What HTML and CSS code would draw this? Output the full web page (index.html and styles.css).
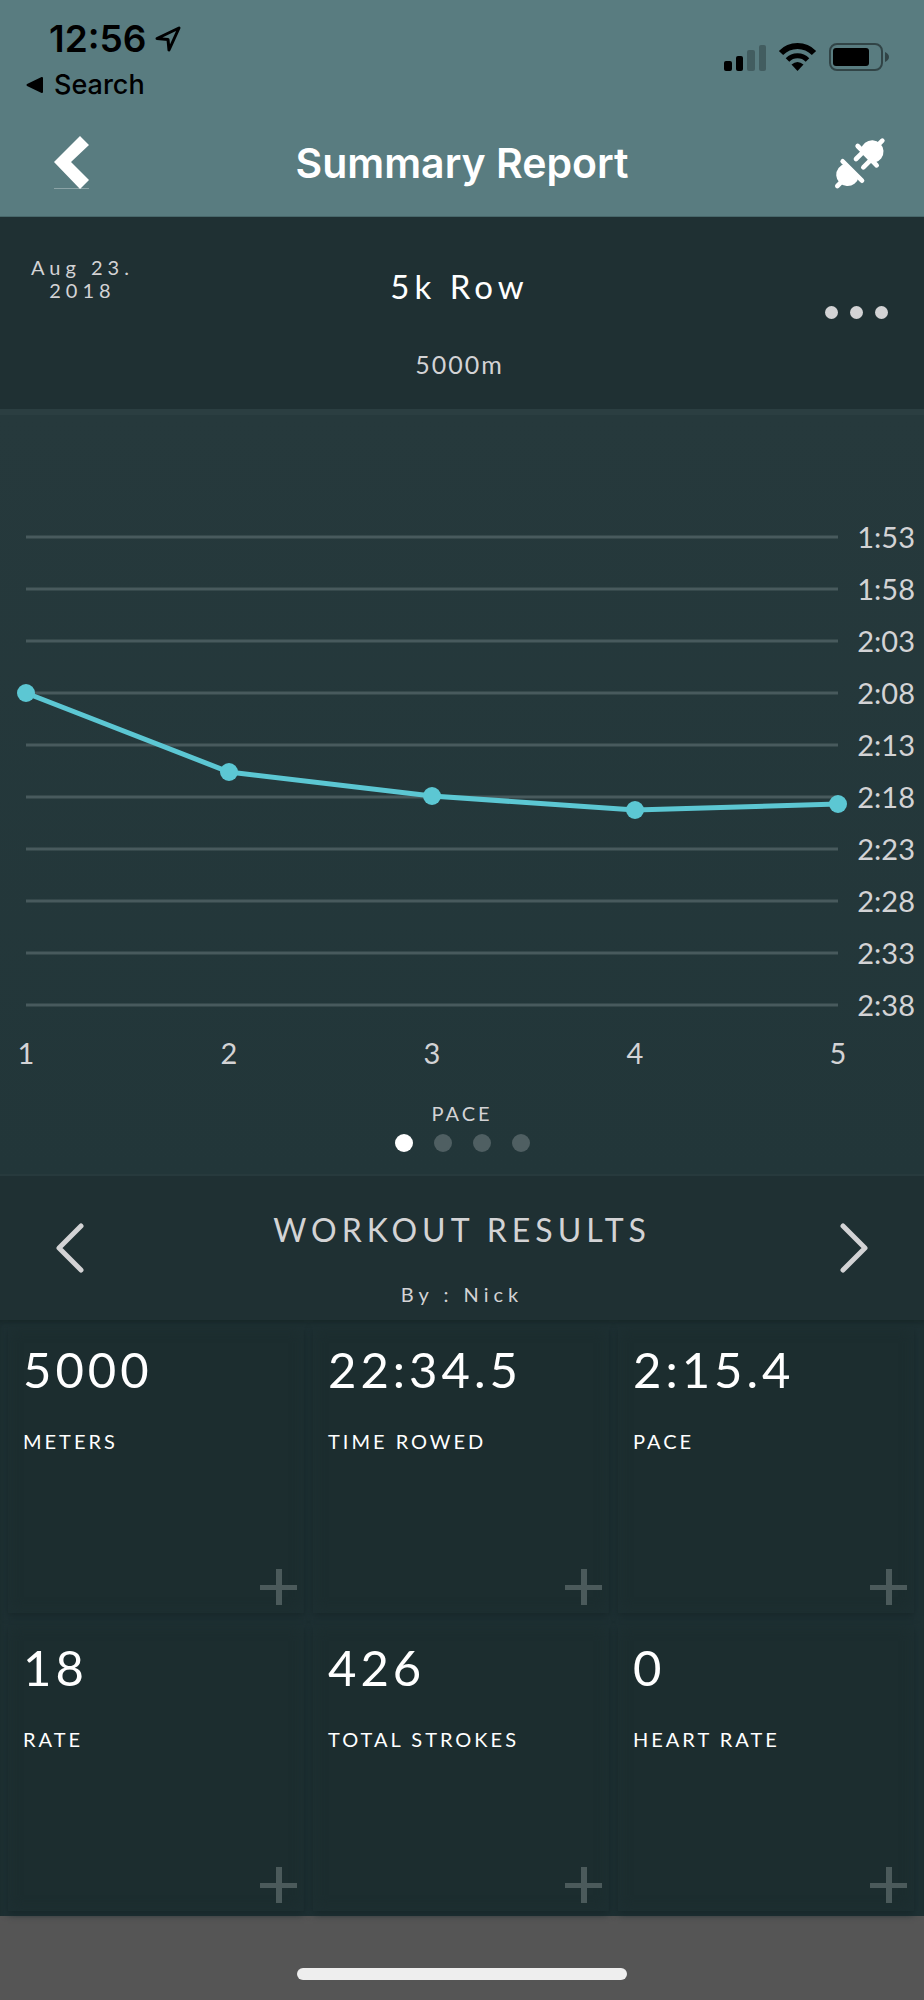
FILE: index.html
```html
<!DOCTYPE html>
<html lang="en">
<head>
  <meta charset="UTF-8" />
  <meta name="viewport" content="width=device-width, initial-scale=1.0"/>
  <title>Summary Report</title>
  <link rel="stylesheet" href="styles.css">
</head>
<body>

  <!-- Top bar -->
  <header class="topbar">
    <div class="status">
      <div>
        <div class="clock">
          12:56
          <svg width="26" height="26" viewBox="0 0 26 26" fill="none" stroke="#000" stroke-width="3" stroke-linejoin="round"><path d="M2 12.500 L24 2 L14 24 L13 13.500 Z"/></svg>
        </div>
        <a class="back-app" href="#">
          <svg width="18" height="18" viewBox="0 0 18 18"><path d="M1.500 9 L16 2 L16 16 Z" stroke="#000" stroke-width="2" stroke-linejoin="round"/></svg>
          Search
        </a>
      </div>
      <div class="status-icons">
        <svg width="42" height="28" viewBox="0 0 42 28">
          <rect x="0" y="18" width="8" height="10" rx="2"/>
          <rect x="12" y="13" width="7" height="15" rx="2"/>
          <rect x="23" y="7" width="8" height="21" rx="2" opacity=".25"/>
          <rect x="35" y="2" width="7" height="26" rx="2" opacity=".25"/>
        </svg>
        <svg width="37" height="28" viewBox="0 0 37 28">
          <path d="M2 10 A23 23 0 0 1 35 10" fill="none" stroke="#000" stroke-width="6"/>
          <path d="M8.500 17 A14 14 0 0 1 28.500 17" fill="none" stroke="#000" stroke-width="5"/>
          <path d="M12.500 21.500 Q18.500 16.500 24.500 21.500 L18.500 28 Z"/>
        </svg>
        <svg width="60" height="28" viewBox="0 0 60 28">
          <rect x="1" y="1" width="52" height="26" rx="7" fill="none" stroke="#000" stroke-width="2" opacity=".45"/>
          <rect x="4" y="5" width="36" height="18" rx="3"/>
          <path d="M56 9 Q60 11 60 14 Q60 17 56 19 Z" opacity=".45"/>
        </svg>
      </div>
    </div>
    <nav class="navbar">
      <button type="button" class="icon-btn" aria-label="Back">
        <svg width="35" height="53" viewBox="0 0 35 53"><path d="M26 0 L35 9 L17 26 L35 44 L26 53 L0 26 Z" fill="#fff"/><path d="M0 52.500 H35" stroke="#fff" opacity=".3"/></svg>
      </button>
      <h1>Summary Report</h1>
      <button type="button" class="icon-btn" aria-label="Connection">
        <svg width="50" height="50" viewBox="0 -4 150 150" fill="#fff" stroke="#fff" stroke-width="14" stroke-linecap="round">
          <path d="M78 31 A34 34 0 1 1 118 70 Z" stroke="none"/>
          <path d="M68 20 L125 78 M128 18 L142 4 M86 36 L63 59 M109 60 L85 84" fill="none"/>
          <path d="M31 73 A34 34 0 1 0 71 113 Z" stroke="none"/>
          <path d="M23 66 L81 124 M20 127 L7 140" fill="none"/>
        </svg>
      </button>
    </nav>
  </header>

  <main>
    <!-- Workout info -->
    <section class="workout">
      <p class="date">Aug 23.<br>2018</p>
      <div class="workout-name">
        <h2>5k Row</h2>
        <p class="distance">5000m</p>
      </div>
      <button type="button" class="more" aria-label="More options"><span></span><span></span><span></span></button>
    </section>

    <!-- Pace chart -->
    <section class="chart">
      <svg class="chart-plot" viewBox="0 0 924 665" role="img" aria-label="Pace per 1000m">
        <g class="grid">
          <path d="M26 122H838 M26 174H838 M26 226H838 M26 278H838 M26 330H838 M26 382H838 M26 434H838 M26 486H838 M26 538H838 M26 590H838"/>
        </g>
        <polyline class="line" points="26,278 229,357 432,381 635,395 838,389"/>
        <g class="points">
          <circle cx="26" cy="278" r="9"/>
          <circle cx="229" cy="357" r="9"/>
          <circle cx="432" cy="381" r="9"/>
          <circle cx="635" cy="395" r="9"/>
          <circle cx="838" cy="389" r="9"/>
        </g>
        <g class="y-labels">
          <text x="915" y="133">1:53</text>
          <text x="915" y="185">1:58</text>
          <text x="915" y="237">2:03</text>
          <text x="915" y="289">2:08</text>
          <text x="915" y="341">2:13</text>
          <text x="915" y="393">2:18</text>
          <text x="915" y="445">2:23</text>
          <text x="915" y="497">2:28</text>
          <text x="915" y="549">2:33</text>
          <text x="915" y="601">2:38</text>
        </g>
        <g class="x-labels">
          <text x="26" y="649">1</text>
          <text x="229" y="649">2</text>
          <text x="432" y="649">3</text>
          <text x="635" y="649">4</text>
          <text x="838" y="649">5</text>
        </g>
      </svg>
      <p class="chart-name">PACE</p>
      <div class="pager">
        <button type="button" class="active" aria-label="Pace chart"></button>
        <button type="button" aria-label="Chart 2"></button>
        <button type="button" aria-label="Chart 3"></button>
        <button type="button" aria-label="Chart 4"></button>
      </div>
    </section>

    <!-- Results -->
    <section class="results-head">
      <button type="button" class="icon-btn" aria-label="Previous">
        <svg width="28" height="50" viewBox="0 0 28 50" fill="none" stroke="#d3d3d5" stroke-width="5" stroke-linecap="round" stroke-linejoin="round"><path d="M25 3 L3 25 L25 47"/></svg>
      </button>
      <div class="results-title">
        <h2>WORKOUT RESULTS</h2>
        <p class="author">By : Nick</p>
      </div>
      <button type="button" class="icon-btn" aria-label="Next">
        <svg width="28" height="50" viewBox="0 0 28 50" fill="none" stroke="#d3d3d5" stroke-width="5" stroke-linecap="round" stroke-linejoin="round"><path d="M3 3 L25 25 L3 47"/></svg>
      </button>
    </section>

    <section class="cards">
      <div class="card">
        <p class="value">5000</p>
        <p class="label">METERS</p>
        <button type="button" class="add" aria-label="Expand meters"></button>
      </div>
      <div class="card">
        <p class="value">22:34.5</p>
        <p class="label">TIME ROWED</p>
        <button type="button" class="add" aria-label="Expand time rowed"></button>
      </div>
      <div class="card">
        <p class="value">2:15.4</p>
        <p class="label">PACE</p>
        <button type="button" class="add" aria-label="Expand pace"></button>
      </div>
      <div class="card">
        <p class="value">18</p>
        <p class="label">RATE</p>
        <button type="button" class="add" aria-label="Expand rate"></button>
      </div>
      <div class="card">
        <p class="value">426</p>
        <p class="label">TOTAL STROKES</p>
        <button type="button" class="add" aria-label="Expand total strokes"></button>
      </div>
      <div class="card">
        <p class="value">0</p>
        <p class="label">HEART RATE</p>
        <button type="button" class="add" aria-label="Expand heart rate"></button>
      </div>
    </section>
  </main>

  <footer class="home-bar"><div class="home-indicator"></div></footer>

</body>
</html>
```
FILE: styles.css
```css
* {
  box-sizing: border-box;
}
body {
  margin: 0;
  background: #555;
  color: #d3d3d5;
  font-family: Lato, sans-serif;
}
h1, h2, p {
  margin: 0;
  font-weight: normal;
}
button {
  padding: 0;
  border: none;
  background: none;
  cursor: pointer;
}
svg {
  display: block;
  overflow: visible;
}

/* top bar */
.topbar {
  background: #597c80;
  border-bottom: 1px solid #48686b;
  font-family: Inter, sans-serif;
}
.status {
  display: flex;
  justify-content: space-between;
  padding: 17px 35px 0 26px;
  color: #000;
}
.clock {
  display: flex;
  align-items: center;
  gap: 9px;
  padding-left: 23px;
  font-size: 37px;
  font-weight: 600;
  line-height: 44px;
}
.back-app {
  display: flex;
  align-items: center;
  gap: 10px;
  margin-top: 7px;
  color: #000;
  font-size: 27px;
  font-weight: 500;
  line-height: 34px;
  text-decoration: none;
}
.status-icons {
  display: flex;
  gap: 13px;
  padding-top: 26px;
}
.navbar {
  display: flex;
  justify-content: space-between;
  align-items: center;
  padding: 34px 39px 27px 54px;
}
.navbar h1 {
  color: #fff;
  font-size: 41px;
  font-weight: 600;
  line-height: 48px;
}

/* workout info */
.workout {
  display: grid;
  grid-template-columns: 1fr auto 1fr;
  padding: 39px 36px 30px 31px;
  background: #1f3033;
  border-bottom: 6px solid #2b3e41;
}
.date {
  justify-self: start;
  font-size: 20px;
  line-height: 23px;
  letter-spacing: 5px;
  text-align: center;
}
.workout-name {
  padding-top: 11px;
  text-align: center;
}
.workout-name h2 {
  color: #fff;
  font-size: 33px;
  line-height: 38px;
  letter-spacing: 5px;
}
.distance {
  margin-top: 44px;
  font-size: 25px;
  line-height: 30px;
  letter-spacing: 2px;
}
.more {
  display: flex;
  gap: 12px;
  align-self: start;
  justify-self: end;
  padding-top: 50px;
}
.more span {
  width: 13px;
  height: 13px;
  border-radius: 50%;
  background: #d3d3d5;
}

/* chart */
.chart {
  padding-bottom: 22px;
  background: linear-gradient(#26393c, #223639);
  border-bottom: 2px solid #273a3d;
}
.chart-plot {
  width: 100%;
  font-size: 29px;
}
.grid path {
  stroke: #485a5d;
  stroke-width: 3;
}
.line {
  fill: none;
  stroke: #5cc7d3;
  stroke-width: 5;
}
.points {
  fill: #5cc7d3;
}
.y-labels {
  fill: #d3d3d5;
  text-anchor: end;
}
.x-labels {
  fill: #d3d3d5;
  text-anchor: middle;
}
.chart-name {
  margin-top: 21px;
  font-size: 20px;
  line-height: 24px;
  letter-spacing: 3px;
  text-align: center;
}
.pager {
  display: flex;
  justify-content: center;
  gap: 21px;
  margin-top: 9px;
}
.pager button {
  width: 18px;
  height: 18px;
  border-radius: 50%;
  background: #4f5f62;
}
.pager .active {
  background: #fff;
}

/* results */
.results-head {
  display: flex;
  justify-content: space-between;
  align-items: center;
  padding: 0 56px;
  background: #1f3033;
  text-align: center;
}
.results-title {
  padding: 35px 0 14px;
}
.results-head h2 {
  font-size: 32px;
  line-height: 38px;
  letter-spacing: 5px;
}
.author {
  margin-top: 33px;
  font-size: 20px;
  line-height: 24px;
  letter-spacing: 5px;
}
.cards {
  display: grid;
  grid-template-columns: repeat(3, 1fr);
  gap: 12px 9px;
  padding: 7px 10px 5px 8px;
  background: #1e3033;
  box-shadow: inset 0 4px 4px -1px #18282a;
}
.card {
  display: flex;
  flex-direction: column;
  min-height: 286px;
  padding: 12px 7px 8px 15px;
  background: #1c2d2f;
  box-shadow: 0 3px 7px #17272a, inset 0 0 14px #1e3033;
  color: #fff;
}
.value {
  font-size: 49px;
  line-height: 60px;
  letter-spacing: 4px;
}
.label {
  margin-top: 30px;
  font-size: 20px;
  line-height: 24px;
  letter-spacing: 3px;
}
.add {
  align-self: flex-end;
  width: 37px;
  height: 36px;
  margin-top: auto;
  background:
    linear-gradient(#4b5a5b, #4b5a5b) center / 100% 5px no-repeat,
    linear-gradient(#4b5a5b, #4b5a5b) center / 6px 100% no-repeat;
}

/* home indicator */
.home-bar {
  padding: 52px 0 20px;
  background: #555;
}
.home-indicator {
  width: 330px;
  height: 12px;
  margin: 0 auto;
  border-radius: 6px;
  background: #eee;
}
```
